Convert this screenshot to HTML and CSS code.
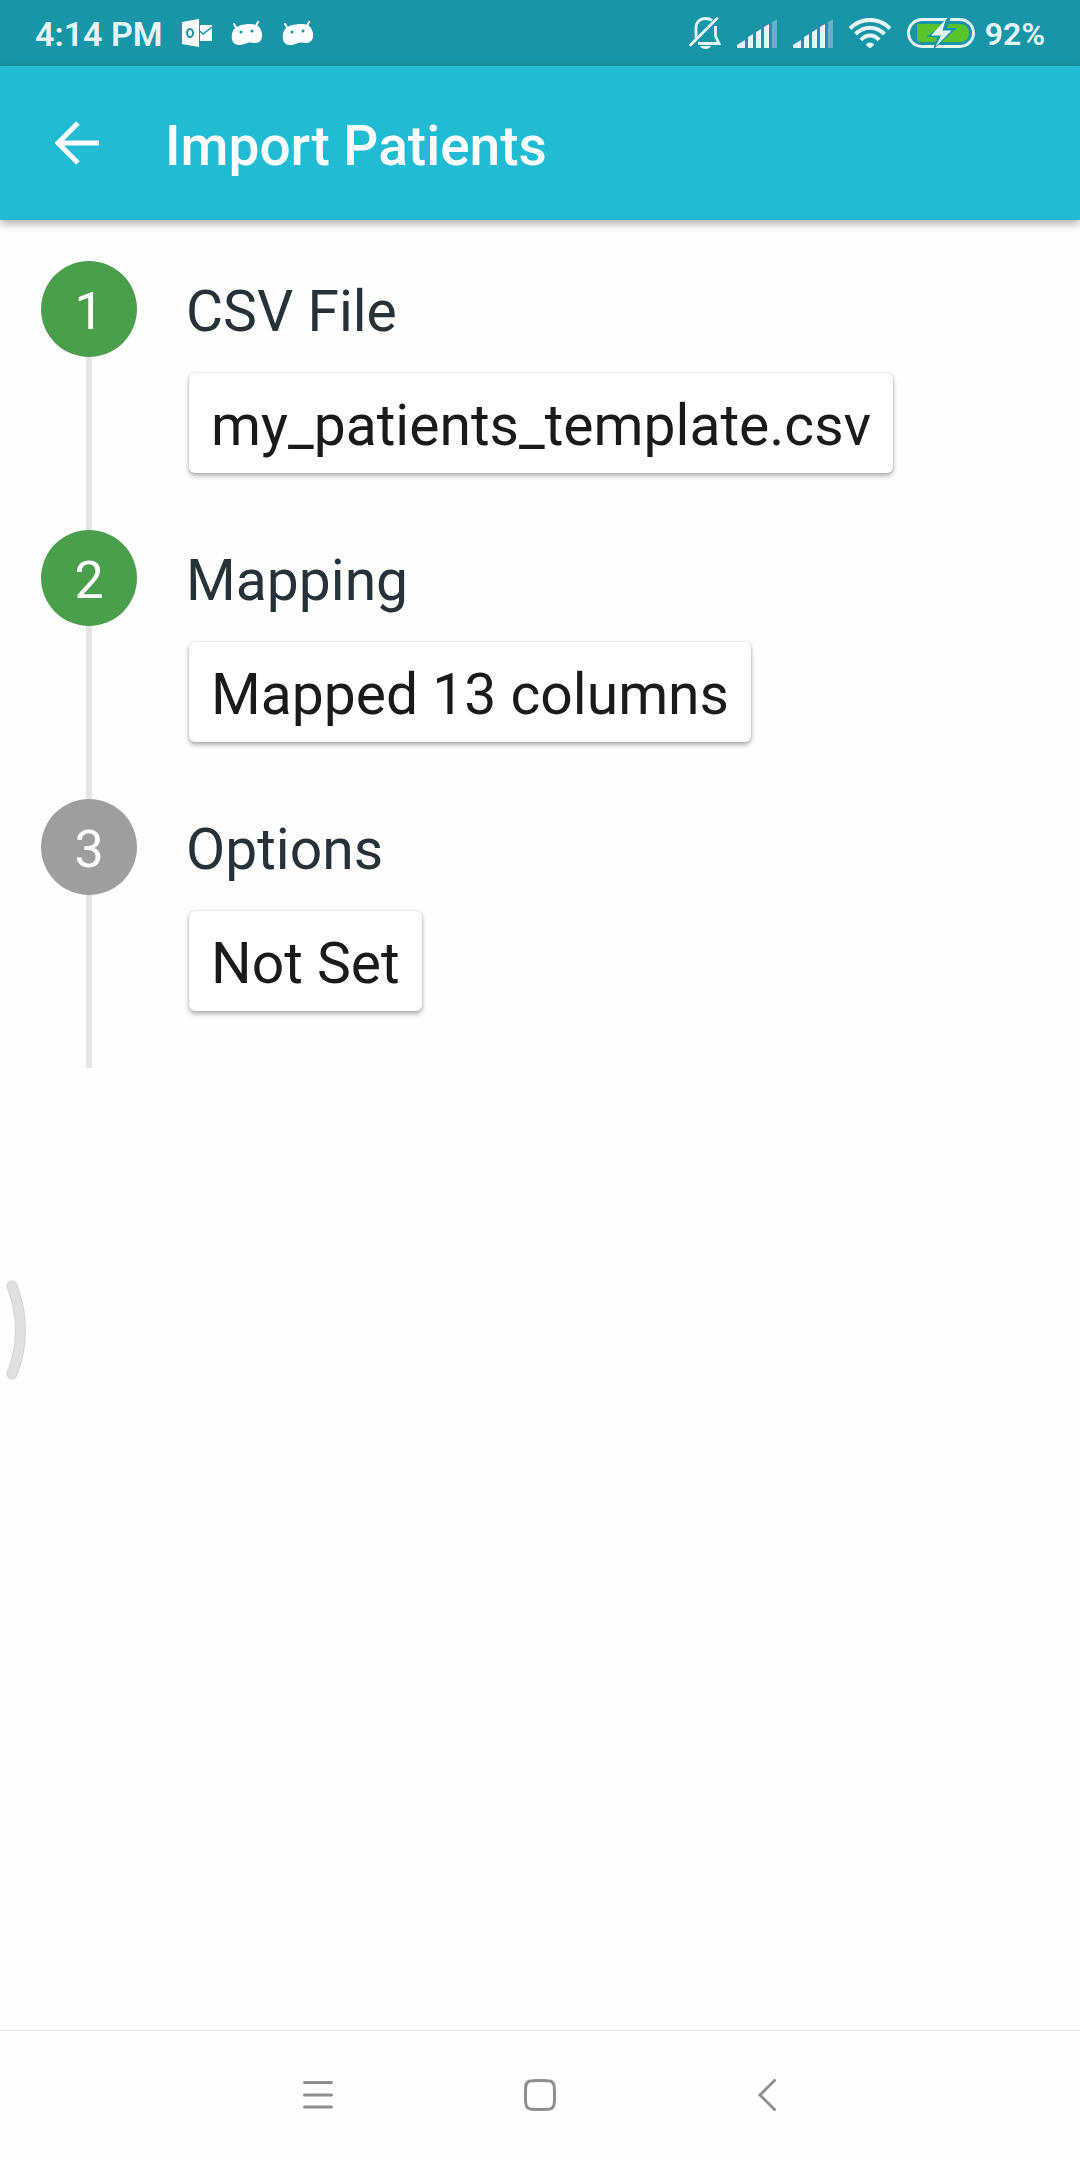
FILE: index.html
```html
<!DOCTYPE html>
<html lang="en">
<head>
    <meta charset="UTF-8">
    <meta name="viewport" content="width=device-width, initial-scale=1.0">
    <title>Import Patients</title>
    <link rel="stylesheet" href="styles.css">
</head>
<body>

<div class="status-bar">
    <div class="status-left">
        <span class="clock">4:14 PM</span>
        <svg class="outlook-icon" width="30" height="28" viewBox="0 0 30 28">
            <path d="M0 3L17 0V28L0 25Z" fill="#fff"/>
            <ellipse cx="8" cy="14" rx="3" ry="4" fill="none" stroke="#1896a7" stroke-width="2"/>
            <path d="M18 6H30V22H18Z" fill="#fff"/>
            <path d="M18 12L21 15L30 8" fill="none" stroke="#1896a7" stroke-width="1.5"/>
        </svg>
        <svg class="android-icon" width="32" height="24" viewBox="0 0 32 24">
            <path d="M3 3L6 8M27 1L24 7" stroke="#fff" stroke-width="2" stroke-linecap="round"/>
            <path d="M1 13C2 7 7 4 14 3.500C21 2.500 27 3 29.500 8C32 13 31.500 19 28 21C25.500 22.500 22 22 19 21.500C16 21.500 13 24 8 24C2 24 0 19 1 13Z" fill="#fff"/>
            <circle cx="10" cy="11" r="1.500" fill="#1896a7"/>
            <circle cx="21" cy="10" r="1.500" fill="#1896a7"/>
        </svg>
        <svg class="android-icon" width="32" height="24" viewBox="0 0 32 24">
            <path d="M3 3L6 8M27 1L24 7" stroke="#fff" stroke-width="2" stroke-linecap="round"/>
            <path d="M1 13C2 7 7 4 14 3.500C21 2.500 27 3 29.500 8C32 13 31.500 19 28 21C25.500 22.500 22 22 19 21.500C16 21.500 13 24 8 24C2 24 0 19 1 13Z" fill="#fff"/>
            <circle cx="10" cy="11" r="1.500" fill="#1896a7"/>
            <circle cx="21" cy="10" r="1.500" fill="#1896a7"/>
        </svg>
    </div>
    <div class="status-right">
        <svg width="32" height="32" viewBox="0 0 32 32">
            <g fill="none" stroke="#e6f5f7" stroke-width="2.800">
                <path d="M7 21V11C7 5 11 1.500 16.500 1.500C19 1.500 21 2 23 3.500"/>
                <path d="M26.500 9V19L30 26.500H9"/>
                <path d="M1.500 28L28 1.500" stroke-linecap="round"/>
            </g>
            <path d="M11 29H22C20.500 33 12.500 33 11 29Z" fill="#e6f5f7"/>
        </svg>
        <svg width="40" height="29" viewBox="0 0 40 29">
            <path d="M0 29V26L8 21V29ZM11 29V18L16 15V29ZM19 29V13L24 10V29ZM27 29V8L32 5V29Z" fill="#e6f5f7"/>
            <path d="M35 29V3L40 0V29Z" fill="#5fb6c2"/>
        </svg>
        <svg width="40" height="29" viewBox="0 0 40 29">
            <path d="M0 29V26L8 21V29ZM11 29V18L16 15V29ZM19 29V13L24 10V29ZM27 29V8L32 5V29Z" fill="#e6f5f7"/>
            <path d="M35 29V3L40 0V29Z" fill="#5fb6c2"/>
        </svg>
        <svg width="42" height="30" viewBox="0 0 42 30">
            <g fill="none" stroke="#e6f5f7" stroke-width="4">
                <path d="M1 10.500C12 -1 30 -1 41 10.500"/>
                <path d="M6.500 16C15 7.500 27 7.500 35.500 16"/>
                <path d="M12 22C17 16 25 16 30 22"/>
            </g>
            <path d="M17 27C17 23.500 25 23.500 25 27L21 30.500Z" fill="#e6f5f7"/>
        </svg>
        <svg width="68" height="30" viewBox="0 0 68 30">
            <rect x="1.500" y="1.500" width="65" height="27" rx="13.500" fill="none" stroke="#e6f5f7" stroke-width="3"/>
            <path d="M10 6H53C65 6 65 24 53 24H15C12 24 10 22 10 19Z" fill="#58c32a"/>
            <path d="M42 -1L19 19H30L26 32L50 10H40L44 -1Z" fill="#1896a7"/>
            <path d="M34 6H37L19 19H25L21 24H15C12 24 10 22 10 19V6Z" fill="#58c32a"/>
            <path d="M39 1L24 17.500H34L28.500 29L44.500 12.500H35.500Z" fill="#e6f5f7"/>
        </svg>
        <span class="battery-level">92%</span>
    </div>
</div>

<header class="app-bar">
    <button class="back-button" aria-label="Back">
        <svg width="44" height="44" viewBox="0 0 44 44" fill="none" stroke="#fff" stroke-width="5">
            <path d="M23 2L3 22L23 42M3 22H44"/>
        </svg>
    </button>
    <h1>Import Patients</h1>
</header>

<main class="steps">
    <section class="step">
        <div class="rail">
            <span class="number done">1</span>
            <span class="line"></span>
        </div>
        <div class="content">
            <h2>CSV File</h2>
            <button class="value">my_patients_template.csv</button>
        </div>
    </section>
    <section class="step">
        <div class="rail">
            <span class="number done">2</span>
            <span class="line"></span>
        </div>
        <div class="content">
            <h2>Mapping</h2>
            <button class="value">Mapped 13 columns</button>
        </div>
    </section>
    <section class="step">
        <div class="rail">
            <span class="number">3</span>
            <span class="line"></span>
        </div>
        <div class="content">
            <h2>Options</h2>
            <button class="value">Not Set</button>
        </div>
    </section>
</main>

<!-- edge swipe handle, floats over the page -->
<svg class="edge-handle" width="22" height="100" viewBox="0 0 22 100" fill="none" stroke-linecap="round">
    <path d="M6 6Q23 50 6 94" stroke="#d2d2d2" stroke-width="11"/>
    <path d="M6 6Q23 50 6 94" stroke="#e0e0e0" stroke-width="9"/>
</svg>

<nav class="nav-bar">
    <button aria-label="Recent apps">
        <svg width="32" height="32" viewBox="0 0 32 32" fill="none" stroke="#8f8f8f" stroke-width="3" stroke-linecap="round">
            <path d="M2.500 3.500H29.500M2.500 16H29.500M2.500 28H29.500"/>
        </svg>
    </button>
    <button aria-label="Home">
        <svg width="32" height="32" viewBox="0 0 32 32" fill="none" stroke="#8f8f8f" stroke-width="3">
            <path d="M8 1.800Q16 1.200 24 1.800Q30 2 30.300 8Q30.800 16 30.300 24Q30 30 24 30.300Q16 30.800 8 30.300Q2 30 1.700 24Q1.200 16 1.700 8Q2 2 8 1.800Z"/>
        </svg>
    </button>
    <button aria-label="Go back">
        <svg width="32" height="32" viewBox="0 0 32 32" fill="none" stroke="#8f8f8f" stroke-width="3" stroke-linecap="round">
            <path d="M28.500 1.500L14 16L28.500 30.500"/>
        </svg>
    </button>
</nav>

</body>
</html>
```

FILE: styles.css
```css
* {
    box-sizing: border-box;
}
body {
    font-family: Roboto, "Liberation Sans", sans-serif;
    background-color: #fefefe;
    display: flex;
    flex-direction: column;
    min-height: 100vh;
    margin: 0;
    position: relative;
}
h1, h2 {
    margin: 0;
}
button {
    font-family: inherit;
    border: none;
    background: none;
    padding: 0;
    cursor: pointer;
}
svg {
    display: block;
    flex-shrink: 0;
}

/* status bar */
.status-bar {
    display: flex;
    justify-content: space-between;
    align-items: center;
    height: 66px;
    padding: 0 35px;
    background-color: #1896a7;
    color: #e6f5f7;
    font-size: 34px;
    font-weight: 600;
}
.status-left {
    display: flex;
    align-items: center;
    gap: 19px;
}
.status-right {
    display: flex;
    align-items: center;
    gap: 16px;
}
.clock, .battery-level {
    padding-top: 2px;
}
.battery-level {
    margin-left: -6px;
    font-size: 32px;
}

/* app bar */
.app-bar {
    display: flex;
    align-items: center;
    gap: 66px;
    height: 154px;
    padding: 0 55px;
    background-color: #21bcd3;
    color: #fff;
    box-shadow: 0 3px 9px rgba(0, 0, 0, 0.35);
}
.app-bar h1 {
    padding-top: 6px;
    font-size: 55px;
    font-weight: 500;
}

/* steps */
.steps {
    flex: 1;
    padding: 41px 41px 0;
}
.step {
    display: flex;
    gap: 49px;
}
.rail {
    display: flex;
    flex-direction: column;
    align-items: center;
    width: 96px;
}
.number {
    width: 96px;
    height: 96px;
    padding-top: 3px;
    border-radius: 50%;
    background-color: #9e9e9e;
    color: #fff;
    font-size: 52px;
    line-height: 96px;
    text-align: center;
}
.number.done {
    background-color: #499f4c;
}
.line {
    flex: 1;
    width: 6px;
    background-color: #e5e5e5;
}
.content {
    padding-bottom: 57px;
}
.content h2 {
    color: #263238;
    font-size: 57px;
    font-weight: 400;
    line-height: 102px;
}
.value {
    display: block;
    margin: 10px 0 0 3px;
    padding: 4px 22px 0;
    height: 100px;
    border-radius: 6px;
    background-color: #fff;
    color: #1a1a1a;
    font-size: 57px;
    box-shadow: 0 0 2px rgba(0, 0, 0, 0.2), 0 3px 5px rgba(0, 0, 0, 0.3);
}

.edge-handle {
    position: absolute;
    left: 6px;
    top: 1280px;
}

/* navigation bar */
.nav-bar {
    display: flex;
    justify-content: center;
    align-items: center;
    gap: 190px;
    height: 130px;
    padding-bottom: 2px;
    border-top: 1px solid #e0e0e0;
}
```
